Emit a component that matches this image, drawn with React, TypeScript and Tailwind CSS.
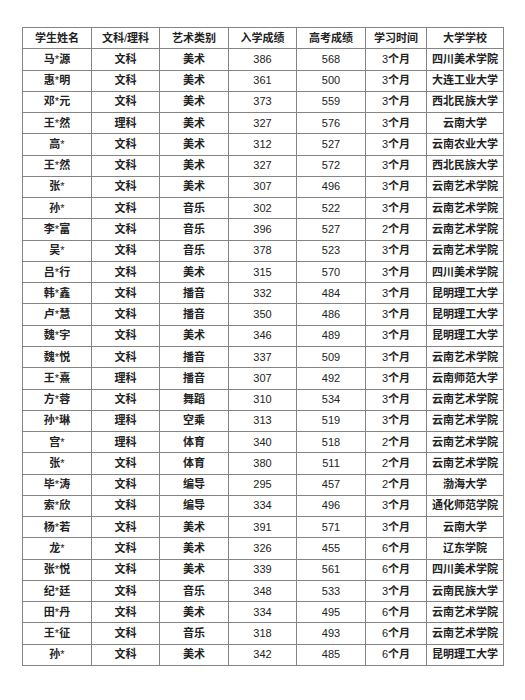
const headers = ['学生姓名', '文科/理科', '艺术类别', '入学成绩', '高考成绩', '学习时间', '大学学校'];

const rows: string[][] = [
  ['马*源', '文科', '美术', '386', '568', '3个月', '四川美术学院'],
  ['惠*明', '文科', '美术', '361', '500', '3个月', '大连工业大学'],
  ['邓*元', '文科', '美术', '373', '559', '3个月', '西北民族大学'],
  ['王*然', '理科', '美术', '327', '576', '3个月', '云南大学'],
  ['高*', '文科', '美术', '312', '527', '3个月', '云南农业大学'],
  ['王*然', '文科', '美术', '327', '572', '3个月', '西北民族大学'],
  ['张*', '文科', '美术', '307', '496', '3个月', '云南艺术学院'],
  ['孙*', '文科', '音乐', '302', '522', '3个月', '云南艺术学院'],
  ['李*富', '文科', '音乐', '396', '527', '2个月', '云南艺术学院'],
  ['吴*', '文科', '音乐', '378', '523', '3个月', '云南艺术学院'],
  ['吕*行', '文科', '美术', '315', '570', '3个月', '四川美术学院'],
  ['韩*鑫', '文科', '播音', '332', '484', '3个月', '昆明理工大学'],
  ['卢*慧', '文科', '播音', '350', '486', '3个月', '昆明理工大学'],
  ['魏*宇', '文科', '美术', '346', '489', '3个月', '昆明理工大学'],
  ['魏*悦', '文科', '播音', '337', '509', '3个月', '云南艺术学院'],
  ['王*熹', '理科', '播音', '307', '492', '3个月', '云南师范大学'],
  ['方*蓉', '文科', '舞蹈', '310', '534', '3个月', '云南艺术学院'],
  ['孙*琳', '理科', '空乘', '313', '519', '3个月', '云南艺术学院'],
  ['宫*', '理科', '体育', '340', '518', '2个月', '云南艺术学院'],
  ['张*', '文科', '体育', '380', '511', '2个月', '云南艺术学院'],
  ['毕*涛', '文科', '编导', '295', '457', '2个月', '渤海大学'],
  ['索*欣', '文科', '编导', '334', '496', '3个月', '通化师范学院'],
  ['杨*若', '文科', '美术', '391', '571', '3个月', '云南大学'],
  ['龙*', '文科', '美术', '326', '455', '6个月', '辽东学院'],
  ['张*悦', '文科', '美术', '339', '561', '6个月', '四川美术学院'],
  ['纪*廷', '文科', '音乐', '348', '533', '3个月', '云南民族大学'],
  ['田*丹', '文科', '美术', '334', '495', '6个月', '云南艺术学院'],
  ['王*征', '文科', '音乐', '318', '493', '6个月', '云南艺术学院'],
  ['孙*', '文科', '美术', '342', '485', '6个月', '昆明理工大学'],
];

// CJK glyphs are heavier in the picture than the digits, so split runs
function Text({ value }: { value: string }) {
  const parts = value.match(/[\u4e00-\u9fff]+|[^\u4e00-\u9fff]+/g) ?? [];
  return (
    <>
      {parts.map((p, i) =>
        /[\u4e00-\u9fff]/.test(p) ? (
          <span key={i} className="font-semibold">{p}</span>
        ) : (
          <span key={i} className="font-normal">{p}</span>
        ),
      )}
    </>
  );
}

function Cell({ text }: { text: string }) {
  return (
    <div className="flex items-center justify-center border-r border-b border-[#858585] text-[11px] leading-none text-[#222] whitespace-nowrap">
      <Text value={text} />
    </div>
  );
}

export default function App() {
  return (
    <div className="w-[525px] h-[700px] bg-white pt-[27px] pl-[22px]">
      <div
        className="grid grid-cols-[69px_68px_69px_68px_69px_61px_77px] auto-rows-[21.27px] w-max border-l border-t border-[#858585]"
        style={{ fontFamily: '"Liberation Sans", "Noto Sans CJK SC", sans-serif' }}
      >
        {headers.map((h) => (
          <Cell key={h} text={h} />
        ))}
        {rows.map((r, i) => r.map((c, j) => <Cell key={i + '-' + j} text={c} />))}
      </div>
    </div>
  );
}
